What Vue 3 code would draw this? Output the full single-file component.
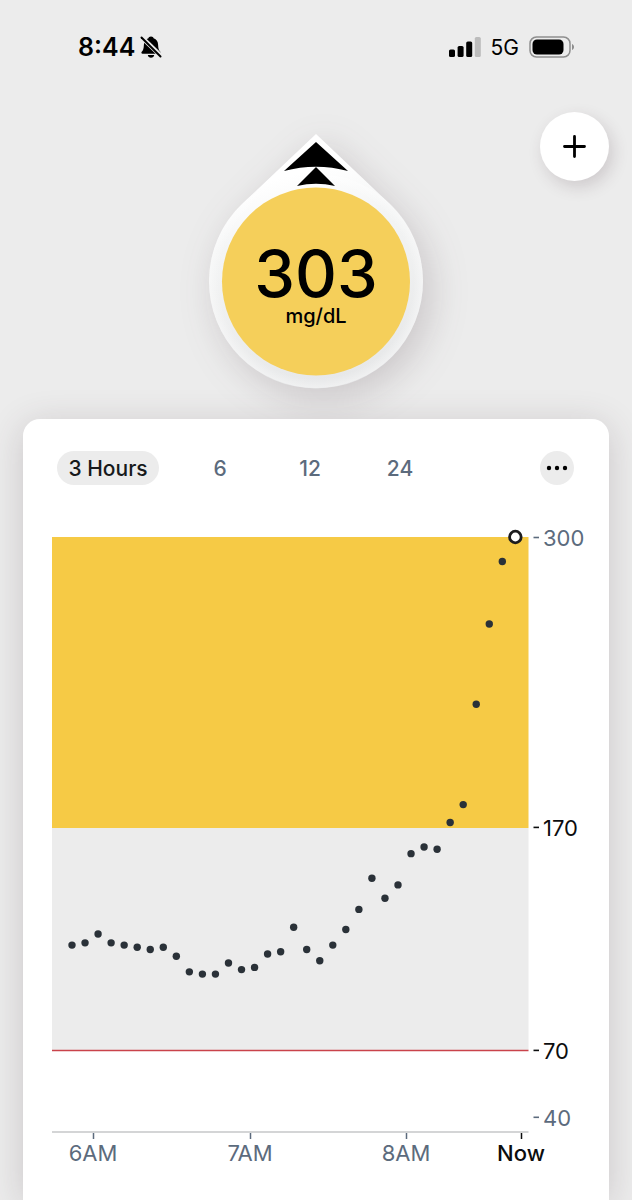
<script setup>
import { ref } from 'vue'

const ranges = [
  { hours: 3, label: '3 Hours' },
  { hours: 6, label: '6' },
  { hours: 12, label: '12' },
  { hours: 24, label: '24' }
]
const selected = ref(3)

// One glucose reading every five minutes, oldest first.
const readings = [
  117, 118, 122, 118, 117, 116, 115, 116, 112, 105, 104, 104, 109, 106, 107,
  113, 114, 125, 115, 110, 117, 124, 133, 147, 138, 144, 158, 161, 160, 172,
  180, 225, 261, 289, 300
]

const plot = { left: 29, top: 52, width: 476.5, firstX: 49, stepX: 13.04, perUnit: 2.23 }
const yOf = (value) => plot.top + (300 - value) * plot.perUnit
const points = readings.map((value, i) => ({ x: plot.firstX + i * plot.stepX, y: yOf(value) }))
const history = points.slice(0, -1)
const latest = points[points.length - 1]

const levels = [
  { value: 300, strong: false },
  { value: 170, strong: true },
  { value: 70, strong: true },
  { value: 40, strong: false }
]
const times = [
  { label: '6AM', x: 70 },
  { label: '7AM', x: 227 },
  { label: '8AM', x: 383 },
  { label: 'Now', x: 498, now: true }
]
</script>

<template>
  <div class="screen">
    <header class="status">
      <span class="clock">8:44</span>
      <svg class="bell" width="22" height="24" viewBox="0 0 22 24" aria-label="Silent mode">
        <path d="M11 1.500c1.600 0 2.300.8 2.600 1.700 3 1 4.400 3.400 4.500 6.500.1 4 .8 5.600 2.200 7.100.7.8.3 1.900-.8 1.900H2.500c-1.100 0-1.500-1.100-.8-1.900 1.400-1.500 2.100-3.100 2.200-7.100.1-3.100 1.500-5.500 4.500-6.500.3-.9 1-1.700 2.600-1.700z" />
        <path d="M7.800 20h6.400c-.3 1.700-1.500 2.700-3.200 2.700s-2.900-1-3.200-2.700z" />
        <path d="M1.500 2L21.500 21.500" stroke="#ececec" stroke-width="4.500" />
        <path d="M1.500 2.500L20.500 21.500" stroke="#000" stroke-width="2" stroke-linecap="round" />
      </svg>
      <div class="signals">
        <svg width="32" height="20" viewBox="0 0 32 20" aria-label="Signal strength">
          <rect x="0" y="12.500" width="6" height="7.500" rx="1.600" />
          <rect x="8.600" y="9" width="6" height="11" rx="1.600" />
          <rect x="17.200" y="4.500" width="6" height="15.500" rx="1.600" />
          <rect x="25.800" y="0" width="6" height="20" rx="1.600" fill="#bcbcbc" />
        </svg>
        <span class="network">5G</span>
        <svg width="46" height="22" viewBox="0 0 46 22" aria-label="Battery">
          <rect x="1" y="1" width="40" height="20" rx="6.500" fill="none" stroke="#8e8e8e" stroke-width="1.500" />
          <rect x="3.500" y="3.500" width="31" height="15" rx="4.500" />
          <path d="M43 8c1.300.5 2 1.600 2 3s-.7 2.500-2 3z" fill="#8d8d8d" />
        </svg>
      </div>
    </header>

    <section class="hero">
      <div class="gauge">
        <svg class="dial" width="214" height="254" viewBox="0 0 214 254" aria-hidden="true">
          <defs>
            <linearGradient id="shell" gradientUnits="userSpaceOnUse" x1="86" y1="40" x2="142" y2="254">
              <stop offset="0" stop-color="#ffffff" />
              <stop offset="0.25" stop-color="#f4f5f5" />
              <stop offset="1" stop-color="#e6e7e8" />
            </linearGradient>
            <radialGradient id="rim" gradientUnits="userSpaceOnUse" cx="107" cy="147" r="107">
              <stop offset="0.91" stop-color="#ffffff" stop-opacity="0" />
              <stop offset="1" stop-color="#ffffff" stop-opacity="0.4" />
            </radialGradient>
          </defs>
          <path d="M107 0L180.600 69.800A107 107 0 1 1 33.400 69.800z" fill="url(#shell)" />
          <circle cx="107" cy="147" r="107" fill="url(#rim)" />
          <circle cx="107" cy="147.500" r="94" fill="#f5cf5a" />
          <path d="M107 8L139 37Q107 28.500 75 37z" />
          <path d="M107 33L126 52Q107 47.500 88 52z" />
        </svg>
        <div class="value">
          <strong class="reading">303</strong>
          <span class="unit">mg/dL</span>
        </div>
      </div>
      <button class="add" type="button" aria-label="Add event">
        <svg width="23" height="23" viewBox="0 0 23 23">
          <path d="M11.500 1.500v20M1.500 11.500h20" stroke="#000" stroke-width="2.800" stroke-linecap="round" />
        </svg>
      </button>
    </section>

    <main class="card">
      <nav class="tabs" aria-label="Time range">
        <button
          v-for="range in ranges"
          :key="range.hours"
          type="button"
          class="tab"
          :class="{ active: selected === range.hours, wide: range.hours === 3 }"
          :aria-pressed="selected === range.hours"
          @click="selected = range.hours"
        >{{ range.label }}</button>
        <button class="more" type="button" aria-label="More options">
          <svg width="22" height="6" viewBox="0 0 22 6">
            <circle cx="3" cy="3" r="2.200" />
            <circle cx="11" cy="3" r="2.200" />
            <circle cx="19" cy="3" r="2.200" />
          </svg>
        </button>
      </nav>

      <svg class="chart" viewBox="0 0 586 700" role="img" aria-label="Glucose over the last three hours">
        <rect :x="plot.left" :y="plot.top" :width="plot.width" height="291" fill="#f6ca45" />
        <rect :x="plot.left" y="343" :width="plot.width" height="222" fill="#ececec" />
        <path d="M29 565.500H505.500" stroke="#c9434b" stroke-width="1.500" />
        <path d="M29 647H505.500" stroke="#c6c7c9" stroke-width="1.500" />

        <g v-for="level in levels" :key="level.value" class="level" :class="{ strong: level.strong }">
          <path :d="`M510.500 ${yOf(level.value) + 0.5}h5.500`" stroke="currentColor" stroke-width="1.600" />
          <text x="520" :y="yOf(level.value) + 9">{{ level.value }}</text>
        </g>

        <g v-for="time in times" :key="time.label" class="time" :class="{ now: time.now }">
          <path :d="`M${time.x + 0.5} 648v6`" stroke="currentColor" stroke-width="1.500" />
          <text :x="time.x" y="676">{{ time.label }}</text>
        </g>

        <circle v-for="(point, i) in history" :key="i" :cx="point.x" :cy="point.y" r="3.700" fill="#2a3138" />
        <circle :cx="latest.x" :cy="latest.y" r="5.800" fill="#fff" stroke="#1c1c1e" stroke-width="2.800" />
      </svg>
    </main>
  </div>
</template>

<style>
body {
  background: #ececec;
}
</style>

<style scoped>
.screen {
  display: flex;
  flex-direction: column;
  min-height: 100vh;
  overflow: hidden;
  background: #ececec;
  color: #000;
  font-family: Inter, "Liberation Sans", sans-serif;
}

button {
  border: 0;
  padding: 0;
  font: inherit;
  cursor: pointer;
}

.status {
  display: flex;
  align-items: center;
  height: 94px;
  padding: 0 57px 0 78px;
}

.clock {
  font-size: 25px;
  font-weight: 600;
}

.bell {
  margin-left: 5px;
}

.signals {
  display: flex;
  align-items: center;
  gap: 10px;
  margin-left: auto;
}

.network {
  font-size: 21px;
  font-weight: 400;
}

.hero {
  display: grid;
  grid-template-columns: 1fr auto 1fr;
  align-items: start;
  padding: 18px 23px 31px;
}

.gauge {
  display: grid;
  grid-column: 2;
  margin-top: 22px;
}

.dial,
.value {
  grid-area: 1 / 1;
}

.dial {
  overflow: visible;
  filter: drop-shadow(8px 10px 18px rgba(70, 50, 60, 0.2));
}

.value {
  z-index: 1;
  display: flex;
  flex-direction: column;
  align-items: center;
  padding-top: 114px;
}

.reading {
  font-size: 65px;
  font-weight: 500;
  line-height: 52px;
}

.unit {
  margin-top: 4px;
  font-size: 20px;
  font-weight: 500;
  line-height: 24px;
}

.add {
  display: flex;
  align-items: center;
  justify-content: center;
  justify-self: end;
  width: 69px;
  height: 69px;
  border-radius: 50%;
  background: #fff;
  box-shadow: 4px 6px 16px rgba(70, 50, 60, 0.18);
}

.card {
  position: relative;
  flex: 1;
  margin: 0 23px;
  padding-top: 32px;
  border-radius: 17px 17px 0 0;
  background: #fff;
  box-shadow: 0 6px 36px rgba(70, 50, 60, 0.2);
}

.tabs {
  display: flex;
  align-items: center;
  padding: 0 35px 0 34px;
}

.tab {
  width: 90px;
  height: 34px;
  border-radius: 17px;
  background: transparent;
  color: #5c6b7d;
  font-size: 21px;
  font-weight: 500;
  white-space: nowrap;
}

.tab.wide {
  width: 102px;
  margin-right: 16px;
}

.tab.active {
  background: #ececec;
  color: #17191b;
}

.more {
  display: flex;
  align-items: center;
  justify-content: center;
  width: 34px;
  height: 34px;
  margin-left: auto;
  border-radius: 50%;
  background: #ececec;
}

.chart {
  display: block;
  width: 100%;
}

.level,
.time {
  color: #5c6b7d;
  fill: currentColor;
  font-size: 22px;
}

.time {
  text-anchor: middle;
}

.level.strong,
.time.now {
  color: #0c0d0e;
}

.time.now {
  font-weight: 500;
}
</style>
